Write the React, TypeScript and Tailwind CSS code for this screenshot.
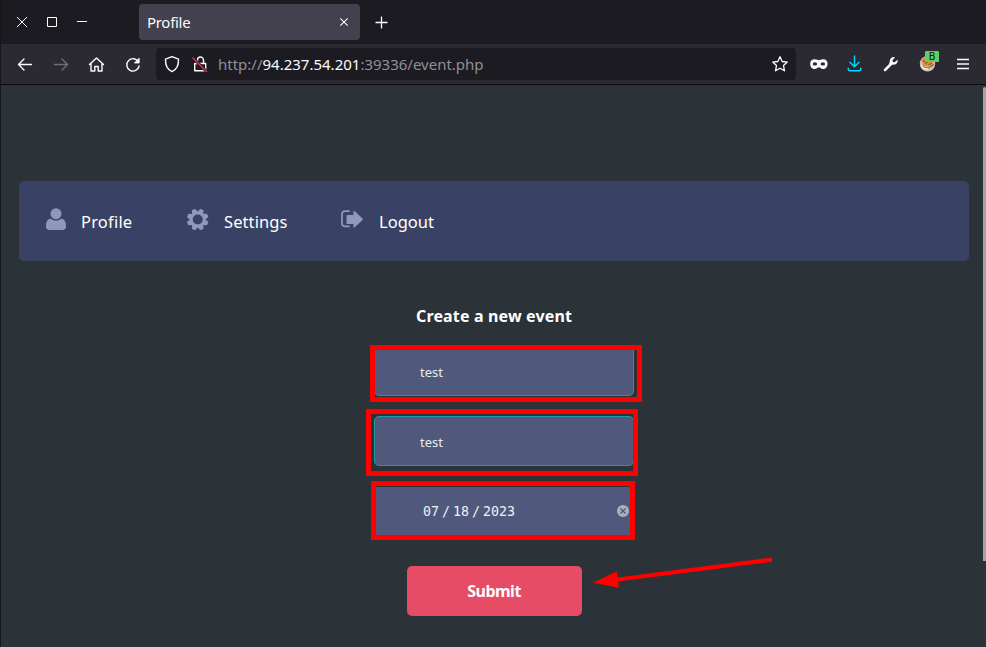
import type { ReactNode } from 'react';

const GEAR_TEETH = [0, 45, 90, 135, 180, 225, 270, 315];

function Icon({ w, h, className, children }: { w: number; h: number; className?: string; children: ReactNode }) {
  return (
    <svg width={w} height={h} viewBox={`0 0 ${w} ${h}`} fill="none" stroke="currentColor" className={`block shrink-0 ${className ?? ''}`}>
      {children}
    </svg>
  );
}

function TitleBar() {
  return (
    <div className="flex h-11 shrink-0 bg-[#1c1b22] text-[#fbfbfe]">
      <Icon w={138} h={44}>
        <path d="M16 17l10 10M26 17L16 27" strokeWidth="1" />
        <path d="M46.500 17.500h9v9h-9z" />
        <path d="M76 21.500h10" />
      </Icon>
      <div className="mt-1 flex h-9 w-[221px] items-center justify-between rounded bg-[#42414d] pl-2 pr-[11px]">
        <span className="text-[15px] leading-5 tracking-[-0.3px]">Profile</span>
        <Icon w={10} h={10}>
          <path d="M1.300 1.300l7.400 7.400M8.700 1.300L1.300 8.700" strokeWidth="1.100" />
        </Icon>
      </div>
      <Icon w={14} h={44} className="ml-[15px]">
        <path d="M.5 22.500h12M6.500 16.500v12" strokeWidth="1.300" />
      </Icon>
    </div>
  );
}

function ToolBar() {
  return (
    <div className="flex h-[41px] shrink-0 border-b border-[#0c0c0d] bg-[#2b2a33] text-[#fbfbfe]">
      <Icon w={155} h={40}>
        <g strokeWidth="1.400" strokeLinecap="round" strokeLinejoin="round" transform="translate(-1 0)">
          <path d="M18.500 20.500h13M24 15l-5.500 5.500L24 26" />
          <path d="M54.500 20.500h13M62 15l5.500 5.500L62 26" stroke="#706f78" />
          <path d="M89.500 20.500l7-6.500 7 6.500M91 19.500v7.500h3.800v-4.500h3.400v4.500h3.800v-7.500" />
          <path d="M138.500 18a6.200 6.200 0 1 0 .6 4" />
          <path d="M139.200 14.500v4.500h-4.500z" fill="currentColor" strokeWidth=".8" />
        </g>
      </Icon>
      <div className="mt-1 flex h-8 w-[640px] items-center rounded bg-[#1c1b22]">
        <Icon w={62} h={32}>
          <g transform="translate(-1 0)">
            <path d="M17 8.700l6.500 2.500c.2 5.300-1.500 10.200-6.500 12.400-5-2.200-6.700-7.100-6.500-12.400z" strokeWidth="1.400" strokeLinejoin="round" />
            <path d="M42.500 15v-3a3 3 0 0 1 6 0v3M39.700 15.500h11v7.300h-11z" strokeWidth="1.400" strokeLinejoin="round" />
            <path d="M37.500 9.500l14.500 14.500" stroke="#1c1b22" strokeWidth="3" />
            <path d="M37.500 9.500l14.500 14.500" stroke="#e22850" strokeWidth="1.500" />
          </g>
        </Icon>
        <span className="flex-1 text-[15px] leading-5 text-[#8f8f98]">
          http://<span className="text-[#fbfbfe]">94.237.54.201</span>:39336/event.php
        </span>
        <Icon w={18} h={18} className="mr-[7px]">
          <path d="M9 1.700l2.200 4.800 5.100.6-3.800 3.500 1 5.200L9 13.200l-4.500 2.600 1-5.200L1.700 7.100l5.100-.6z" strokeWidth="1.300" strokeLinejoin="round" />
        </Icon>
      </div>
      <Icon w={189} h={40}>
        <g transform="translate(-1.200 -1.100) scale(1.070)" stroke="none">
          <path d="M18.500 15.300c2.300 0 3 .9 4 .9s1.700-.9 4-.9c2.700 0 4.100 1.700 4.100 4.100 0 3-1.800 5-4.100 5-1.800 0-2.800-1.700-4-1.700s-2.200 1.700-4 1.700c-2.300 0-4.100-2-4.100-5 0-2.400 1.400-4.100 4.100-4.100z" fill="currentColor" />
          <ellipse cx="18.800" cy="19.700" rx="2.100" ry="1.500" fill="#2b2a33" />
          <ellipse cx="26.200" cy="19.700" rx="2.100" ry="1.500" fill="#2b2a33" />
        </g>
        <path d="M58.500 12v10.500M54 18.300l4.500 4.400 4.500-4.400M52.200 24.300v.7c0 1 .8 1.700 1.800 1.700h9c1 0 1.800-.7 1.800-1.700v-.7" stroke="#00ddff" strokeWidth="1.400" strokeLinecap="round" strokeLinejoin="round" />
        <path d="M89 26l6.500-6.500" strokeWidth="2.500" strokeLinecap="round" />
        <path d="M99 13.200l-2.500 3 .3 1.800 1.800.3 3-2.500c.5 3.200-1.600 5.200-4.300 4.800l-3.300.5-.8-.8.6-3.200c0-2.600 2.200-4.500 5.200-3.900z" fill="currentColor" stroke="none" />
        <circle cx="131.500" cy="19.700" r="7.700" fill="#cfc2b2" stroke="none" />
        <path d="M125.500 16l4-3.500 8 5.500-1 4.500-9-.5z" fill="#e08a3c" stroke="none" />
        <path d="M124.400 20.500c2 2.200 5 3.700 8 3.500l5.600-3.500M127 17l4.500 1-2.500 2M132.500 20.500l3-1" stroke="#6b4b35" strokeWidth=".9" />
        <path d="M124.700 20.500c1 3.800 4 4.500 7.500 4.500" stroke="#fff0dd" strokeWidth="1.200" />
        <rect x="129" y="7" width="14" height="11" rx="1" fill="#5fcf65" stroke="none" />
        <text x="136" y="16" textAnchor="middle" fontSize="10" fill="#111" stroke="none">B</text>
        <path d="M161 15.500h12M161 20h12M161 24.500h12" strokeWidth="1.300" />
      </Icon>
    </div>
  );
}

function Nav() {
  return (
    <nav className="mt-24 ml-[18px] flex h-20 w-[950px] rounded-[5px] bg-[#394264] text-white">
      <div className="flex w-[141px] pl-[27px] pt-[27px]">
        <Icon w={20} h={23} className="text-[#9199bb]">
          <g fill="currentColor" stroke="none">
            <path d="M4.700 10.500C1 11.500 0 14 0 18.300 0 21 1.300 22 3.400 22h13.200c2.100 0 3.400-1 3.400-3.700 0-4.300-1-6.800-4.700-7.800-1.400 1.400-3.200 2-5.300 2s-3.900-.6-5.300-2z" />
            <circle cx="10" cy="5.700" r="5.500" />
          </g>
        </Icon>
        <span className="ml-[15px] mt-0.5 whitespace-nowrap text-[16.500px] leading-6 tracking-[0.2px]">Profile</span>
      </div>
      <div className="flex w-[153px] pl-[27px] pt-[27px]">
        <Icon w={22} h={23} className="text-[#9199bb]">
          <circle cx="10.700" cy="11.500" r="6.600" strokeWidth="3.200" />
          {GEAR_TEETH.map((angle) => (
            <path key={angle} d="M7.700 4.500l1.100-3.700q1.900-.5 3.800 0l1.100 3.700z" fill="currentColor" stroke="none" transform={`rotate(${angle + 22.5} 10.7 11.5)`} />
          ))}
        </Icon>
        <span className="ml-[15px] mt-0.5 whitespace-nowrap text-[16.500px] leading-6 tracking-[0.100px]">Settings</span>
      </div>
      <div className="flex pl-[27px] pt-[27px]">
        <Icon w={23} h={22} className="text-[#9199bb]">
          <path d="M9.600 3.200H5.100Q2 3.200 2 6.300v9q0 3.100 3.100 3.100h4.500" strokeWidth="1.700" />
          <path d="M6.500 8q0-1 1-1h6V3.500q0-1.300 1-.6l8 7.600q.6.800 0 1.600l-8 7.300q-1 .8-1-.5V16h-6q-1 0-1-1z" fill="currentColor" stroke="none" />
        </Icon>
        <span className="ml-4 mt-0.5 whitespace-nowrap text-[16.500px] leading-6">Logout</span>
      </div>
    </nav>
  );
}

function EventForm() {
  return (
    <form className="ml-[373px] w-[260px] pt-[43px]">
      <h1 className="ml-[42px] whitespace-nowrap text-[16px] font-bold leading-6 tracking-[0.150px] text-white">Create a new event</h1>
      <div className="mt-[18px] flex h-[50px] items-center rounded-[5px] border border-[#1d9aa6] bg-[#50597b] pl-[45px] pt-[3px] text-[13px] text-[#e9ebf1]">test</div>
      <div className="mt-5 flex h-[50px] items-center rounded-[5px] border border-[#1d9aa6] bg-[#50597b] pl-[45px] pt-[3px] text-[13px] text-[#e9ebf1]">test</div>
      <div className="mt-[21px] flex h-12 items-center justify-between rounded-[2px] bg-[#50597b] pl-[49px] pr-[5px] text-[13.300px] text-[#eef0f5]">
        <span className="whitespace-pre pt-px font-['DejaVu_Sans_Mono',monospace]">
          07<span className="mx-[3px]">/</span>18<span className="mx-[3px]">/</span>2023
        </span>
        <Icon w={12} h={12}>
          <circle cx="6" cy="6" r="6" fill="#abb0c1" stroke="none" />
          <path d="M3.500 3.500l5 5m0-5l-5 5" stroke="#50597b" strokeWidth="1.400" />
        </Icon>
      </div>
      <button type="button" className="ml-[33px] mt-[31px] block h-[50px] w-[175px] rounded-[5px] bg-[#e64c65] pr-px text-[16px] font-bold tracking-[-0.500px] text-white">Submit</button>
    </form>
  );
}

function Annotations() {
  return (
    <>
      <div className="absolute left-[370px] top-[345px] h-[57px] w-[272px] border-[5px] border-[#ff0000]" />
      <div className="absolute left-[366px] top-[409px] h-[67px] w-[272px] border-[5px] border-[#ff0000]" />
      <div className="absolute left-[371px] top-[481px] h-[59px] w-[264px] border-[5px] border-[#ff0000]" />
      <svg className="absolute left-[590px] top-[550px]" width="190" height="45" viewBox="0 0 190 45">
        <path d="M3 32.700L27 21.300l.7 6.200L181.700 7.500l.5 4.300L28.200 31.500l.6 6.200z" fill="#ff0000" />
      </svg>
    </>
  );
}

export default function App() {
  return (
    <div className="relative flex h-[647px] w-[986px] flex-col overflow-hidden border-l border-[#171719] bg-[#2b3238] font-['Noto_Sans',sans-serif]">
      <TitleBar />
      <ToolBar />
      <main className="flex min-h-0 flex-1">
        <div className="w-[982px] shrink-0">
          <Nav />
          <EventForm />
        </div>
        <div className="mt-[2px] h-[474px] w-[3px] rounded-t-sm bg-[#a4a4a4]" />
      </main>
      <div className="absolute -left-px top-0 h-[647px] w-[986px]">
        <Annotations />
      </div>
    </div>
  );
}
